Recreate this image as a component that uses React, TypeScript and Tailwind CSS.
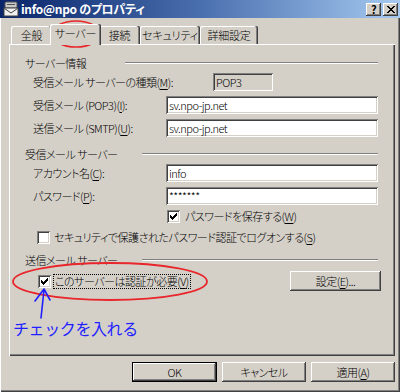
import type { ReactNode } from "react"

const raised =
  "shadow-[inset_-1px_-1px_#404040,inset_1px_1px_#ffffff,inset_-2px_-2px_#808080,inset_2px_2px_#d4d0c8]"
const sunken =
  "shadow-[inset_1px_1px_#808080,inset_-1px_-1px_#ffffff,inset_2px_2px_#404040,inset_-2px_-2px_#d4d0c8]"

function K({ children }: { children: ReactNode }) {
  return <span className="underline underline-offset-2">{children}</span>
}

function Check({ checked }: { checked?: boolean }) {
  const tops = [2, 3, 4, 3, 2, 1, 0]
  return (
    <div className={`h-[13px] w-[13px] shrink-0 bg-white ${sunken}`}>
      {checked && (
        <svg width="13" height="13" viewBox="0 0 13 13" shapeRendering="crispEdges">
          {tops.map((t, i) => (
            <rect key={i} x={3 + i} y={3 + t} width="1" height="3" fill="#000" />
          ))}
        </svg>
      )}
    </div>
  )
}

function Edit({ value }: { value: string }) {
  return (
    <div className={`flex h-[18px] w-[212px] items-center bg-white pl-[3px] ${sunken}`}>{value}</div>
  )
}

function Group({ label, line }: { label: string; line: string }) {
  return (
    <div className="flex h-[18px] items-center justify-between pl-[16px] pr-[17px]">
      <span>{label}</span>
      <div className={`h-[2px] border-t border-b border-t-[#808080] border-b-white ${line}`} />
    </div>
  )
}

function TitleBar() {
  return (
    <div className="flex h-[18px] items-center bg-linear-to-r from-[#0a246a] via-[#4a6fae] to-[#a6caf0] pl-[3px] pr-[2px]">
      <svg width="16" height="16" viewBox="0 0 16 16">
        <rect x="2" y="1" width="12" height="6" rx="1" fill="#c8c8c8" stroke="#555" />
        <rect x="4" y="3" width="8" height="1" fill="#555" />
        <rect x="1" y="7" width="14" height="8" fill="#f0f0f0" stroke="#404040" />
        <path d="M1.5 7.5 L8 12 L14.5 7.5" fill="none" stroke="#404040" />
      </svg>
      <span className="ml-[2px] text-[12px] font-bold tracking-[-0.3px] text-white">info@npo のプロパティ</span>
      <div className="ml-auto flex gap-[2px]">
        <div className={`flex h-[13px] w-[15px] items-center justify-center bg-[#d4d0c8] text-[11px] font-bold ${raised}`}>
          ?
        </div>
        <div className={`flex h-[13px] w-[15px] items-center justify-center bg-[#d4d0c8] ${raised}`}>
          <svg width="8" height="7" viewBox="0 0 8 7" shapeRendering="crispEdges">
            <path d="M0 0h2v1h-2zM6 0h2v1h-2zM1 1h2v1h-2zM5 1h2v1h-2zM2 2h4v1h-4zM3 3h2v1h-2zM2 4h4v1h-4zM1 5h2v1h-2zM5 5h2v1h-2zM0 6h2v1h-2zM6 6h2v1h-2z" fill="#000" />
          </svg>
        </div>
      </div>
    </div>
  )
}

function Tab({ label, w, active }: { label: string; w: string; active?: boolean }) {
  if (active) {
    return (
      <div
        className={`relative z-10 -mx-[2px] -mb-[1px] flex h-[21px] items-center justify-center rounded-t-[2px] bg-[#d4d0c8] pb-[2px] shadow-[inset_-1px_0_#404040,inset_-2px_0_#808080,inset_1px_1px_#ffffff] ${w}`}
      >
        {label}
      </div>
    )
  }
  return (
    <div
      className={`flex h-[18px] items-center justify-center rounded-t-[2px] bg-[#d4d0c8] shadow-[inset_-1px_0_#404040,inset_-2px_0_#808080,inset_1px_1px_#ffffff] ${w}`}
    >
      {label}
    </div>
  )
}

export default function App() {
  return (
    <div className="relative h-[392px] w-[400px] overflow-hidden whitespace-nowrap bg-[#d4d0c8] font-['Noto_Sans_CJK_JP',sans-serif] text-[11px] font-light leading-none tracking-[-0.5px] text-black [font-feature-settings:'palt'] shadow-[inset_1px_0_#ffffff,inset_-1px_-1px_#404040,inset_-2px_-2px_#808080]">
      <TitleBar />

      {/* tabs */}
      <div className="mt-[6px] flex h-[20px] items-end pl-[11px] tracking-[-0.2px]">
        <Tab label="全般" w="w-[41px]" />
        <Tab label="サーバー" w="w-[51px]" active />
        <Tab label="接続" w="w-[41px]" />
        <Tab label="セキュリティ" w="w-[60px]" />
        <Tab label="詳細設定" w="w-[58px]" />
      </div>

      {/* panel */}
      <div className="ml-[9px] flex h-[312px] w-[386px] flex-col pt-[10px] shadow-[inset_1px_1px_#ffffff,inset_-1px_-1px_#404040,inset_-2px_-2px_#808080]">
        <Group label="サーバー情報" line="w-[253px]" />
        <div className="mt-[1px] flex h-[18px] items-center pl-[24px]">
          <span className="w-[180px]">
            受信メール サーバーの種類(<K>M</K>):
          </span>
          <div className={`flex h-[18px] w-[60px] items-center pl-[3px] ${sunken}`}>POP3</div>
        </div>
        <div className="mt-[5px] flex h-[18px] items-center pl-[24px]">
          <span className="w-[133px]">
            受信メール (POP3)(<K>I</K>):
          </span>
          <Edit value="sv.npo-jp.net" />
        </div>
        <div className="mt-[5px] flex h-[18px] items-center pl-[24px]">
          <span className="w-[133px]">
            送信メール (SMTP)(<K>U</K>):
          </span>
          <Edit value="sv.npo-jp.net" />
        </div>

        <div className="mt-[8px]">
          <Group label="受信メール サーバー" line="w-[236px]" />
        </div>
        <div className="mt-[1px] flex h-[18px] items-center pl-[24px]">
          <span className="w-[133px]">
            アカウント名(<K>C</K>):
          </span>
          <Edit value="info" />
        </div>
        <div className="mt-[5px] flex h-[18px] items-center pl-[24px]">
          <span className="w-[133px]">
            パスワード(<K>P</K>):
          </span>
          <Edit value="*******" />
        </div>
        <div className="mt-[2px] flex h-[18px] items-center gap-[5px] pl-[158px]">
          <Check checked />
          <span>
            パスワードを保存する(<K>W</K>)
          </span>
        </div>
        <div className="mt-[3px] flex h-[18px] items-center gap-[4px] pl-[28px]">
          <Check />
          <span>
            セキュリティで保護されたパスワード認証でログオンする(<K>S</K>)
          </span>
        </div>

        <div className="mt-[5px]">
          <Group label="送信メール サーバー" line="w-[236px]" />
        </div>
        <div className="mt-[2px] flex h-[20px] items-center pl-[29px] pr-[14px]">
          <Check checked />
          <span className="ml-[2px] flex h-[15px] items-center border border-dotted border-black px-[1px]">
            このサーバーは認証が必要(<K>V</K>)
          </span>
          <button className={`ml-auto flex h-[20px] w-[91px] items-center justify-center bg-[#d4d0c8] ${raised}`}>
            設定(<K>E</K>)...
          </button>
        </div>

        <div className="mt-[27px] flex h-[20px] items-center pl-[4px] text-[16px] font-normal tracking-[-0.4px] text-[#1f1fff] [font-feature-settings:normal]">
          チェックを入れる
        </div>
      </div>

      {/* dialog buttons */}
      <div className="mt-[6px] flex gap-[5px] pl-[132px]">
        <button className="flex h-[20px] w-[85px] items-center justify-center bg-[#d4d0c8] shadow-[inset_0_0_0_1px_#000000,inset_-2px_-2px_#404040,inset_2px_2px_#ffffff,inset_-3px_-3px_#808080]">
          OK
        </button>
        <button className={`flex h-[20px] w-[84px] items-center justify-center bg-[#d4d0c8] ${raised}`}>
          キャンセル
        </button>
        <button className={`flex h-[20px] w-[84px] items-center justify-center bg-[#d4d0c8] ${raised}`}>
          適用(<K>A</K>)
        </button>
      </div>

      {/* annotations drawn over the dialog */}
      <svg className="pointer-events-none absolute left-0 top-0" width="400" height="392">
        <ellipse cx="76" cy="34" rx="24" ry="13" fill="none" stroke="#e8262b" strokeWidth="1.6" />
        <ellipse cx="110" cy="281.5" rx="97" ry="18.5" fill="none" stroke="#e8262b" strokeWidth="1.8" />
        <path
          d="M41 318 L44 290 M44 289 L35 301 M44 289 L50 300"
          fill="none"
          stroke="#1f1fff"
          strokeWidth="1.6"
          strokeLinecap="round"
        />
      </svg>
    </div>
  )
}
